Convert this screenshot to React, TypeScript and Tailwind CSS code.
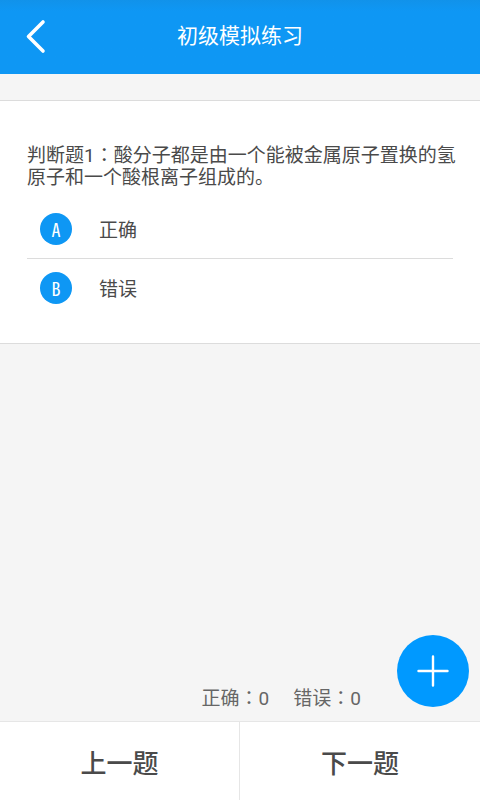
const font = "font-[Roboto,'Noto_Sans_CJK_SC',sans-serif]";

const options = [
    { key: "A", label: "正确" },
    { key: "B", label: "错误" },
];

// full-width colon, centred in its box
function Colon() {
    return <span className="font-['Noto_Sans_CJK_TC',sans-serif]">：</span>;
}

function Header() {
    return (
        <header className="grid h-[74px] grid-cols-[72px_1fr_72px] items-center bg-linear-to-b from-[#1192ea] to-[#0e97f4] to-15% text-white">
            <button type="button" aria-label="返回" className="flex h-full items-center justify-center">
                <svg width="24" height="36" viewBox="0 0 24 36" fill="none" stroke="currentColor" strokeWidth="3.6" strokeLinecap="round" strokeLinejoin="round">
                    <path d="M19 3 L4.5 17.5 L19 32" />
                </svg>
            </button>
            <h1 className="pb-0.5 text-center text-[21px] leading-8">初级模拟练习</h1>
        </header>
    );
}

function Question() {
    return (
        <section className="mt-[26px] border-y border-[#dcdcdc] bg-white px-[27px] pt-[42px] pb-[26px]">
            <p className="-mr-4 text-[19px] leading-[22px]">
                判断题1<Colon />酸分子都是由一个能被金属原子置换的氢原子和一个酸根离子组成的。
            </p>
            <ul className="mt-[11px] divide-y divide-[#dcdcdc]">
                {options.map((option) => (
                    <li key={option.key}>
                        <button type="button" className="flex h-[58px] w-full items-center gap-[27px] px-[13px]">
                            <span className="flex size-8 items-center justify-center rounded-full bg-[#0e97f4] font-['Noto_Sans_Mono_CJK_SC','Roboto_Condensed',Roboto,sans-serif] text-lg text-white">
                                {option.key}
                            </span>
                            <span className="pt-1 text-[19px] leading-[22px]">{option.label}</span>
                        </button>
                    </li>
                ))}
            </ul>
        </section>
    );
}

function Score() {
    return (
        <div className="mt-auto flex justify-end gap-6 pr-[119px] pb-2 text-[19px] leading-7 text-[#666]">
            <span>正确<Colon />0</span>
            <span>错误<Colon />0</span>
        </div>
    );
}

function Pager() {
    return (
        <nav className="grid h-[79px] grid-cols-2 divide-x divide-[#e6e6e6] border-t border-[#e6e6e6] bg-white text-[26px] font-medium">
            <button type="button" className="pt-1.5">上一题</button>
            <button type="button" className="pt-1.5">下一题</button>
        </nav>
    );
}

export default function App() {
    return (
        <main className={`relative flex min-h-screen flex-col bg-[#f5f5f5] text-[#4a4a4a] ${font}`}>
            <Header />
            <Question />
            <Score />
            <Pager />
            <button type="button" aria-label="添加" className="absolute right-[11px] bottom-[93px] flex size-[72px] items-center justify-center rounded-full bg-[#0099ff] text-white">
                <svg width="32" height="32" viewBox="0 0 32 32" stroke="currentColor" strokeWidth="2.4" strokeLinecap="round">
                    <path d="M16 1.5 V30.5 M1.5 16 H30.5" />
                </svg>
            </button>
        </main>
    );
}
